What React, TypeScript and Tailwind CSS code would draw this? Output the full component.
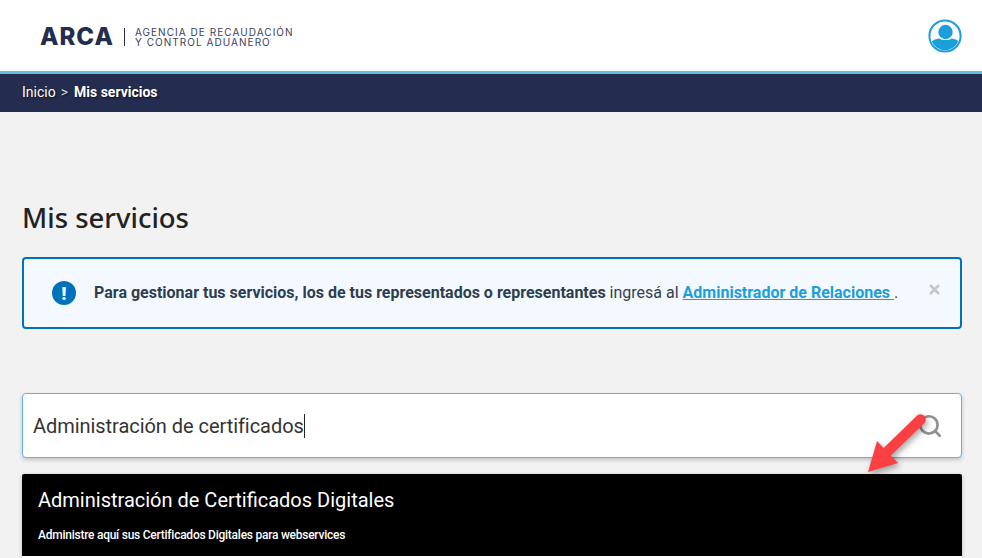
import { Search, X } from "lucide-react";

const roboto = "font-['Roboto','Liberation_Sans',sans-serif]";

const UserIcon = () => (
	<svg width="34" height="34" viewBox="0 0 34 34" aria-hidden="true">
		<defs>
			<clipPath id="user-clip">
				<circle cx="17" cy="17" r="14.2" />
			</clipPath>
		</defs>
		<circle cx="17" cy="17" r="15.6" fill="white" stroke="#1a9fdb" strokeWidth="2" />
		<g clipPath="url(#user-clip)" fill="#1a9fdb">
			<circle cx="17.5" cy="13" r="7.2" />
			<path d="M2 34 V25 C3 21.5 7 20 11.5 19.4 C14 21.4 21 21.4 23.5 19.4 C28 20 31 21.5 32 25 V34 Z" />
		</g>
	</svg>
);

const RedArrow = () => (
	<svg
		className="pointer-events-none absolute left-[860px] top-[410px] drop-shadow-[2px_3px_3px_rgba(0,0,0,0.35)]"
		width="72"
		height="72"
		viewBox="0 0 72 72"
		aria-hidden="true"
	>
		<path d="M60.5 9.5 L26 43" stroke="#fb4044" strokeWidth="10.5" strokeLinecap="round" fill="none" />
		<path d="M8 62 L17 31 L38 53 Z" fill="#fb4044" />
	</svg>
);

export default function App() {
	return (
		<main className={`relative h-[558px] w-[982px] overflow-hidden bg-[#f2f2f2] ${roboto}`}>
			<header className="flex h-[74px] items-center justify-between border-b-[3px] border-[#5bc4de] bg-white pl-[40px] pr-[20px]">
				<div className="mt-[3px] flex items-center">
					<span className="font-['Inter',sans-serif] text-[24px] font-extrabold leading-none tracking-[1px] text-[#242c4f]">
						ARCA
					</span>
					<span className="mx-[10px] h-[18px] w-px bg-[#242c4f]" />
					<div className="font-['Inter',sans-serif] text-[10px] tracking-[1.05px] text-[#3a4160]">
						<div className="h-[10px] overflow-visible leading-[10px]">AGENCIA DE RECAUDACIÓN</div>
						<div className="h-[10px] overflow-visible leading-[10px]">Y CONTROL ADUANERO</div>
					</div>
				</div>
				<UserIcon />
			</header>

			<nav className="flex h-[38px] items-center bg-[#242c4f] px-[22px] pb-[2px] text-[14px] text-white [text-shadow:1px_1px_2px_rgba(0,0,0,0.6)]">
				<span>Inicio</span>
				<span className="ml-[5px] mr-[6px] text-[#d5d8e2]">&gt;</span>
				<b className="font-bold">Mis servicios</b>
			</nav>

			<div className="pl-[22px] pr-[20px]">
				<h1 className="mt-[87px] font-['Noto_Sans',sans-serif] text-[27.5px] font-medium leading-[38px] text-[#222222]">
					Mis servicios
				</h1>

				<div className="relative mt-[20px] flex h-[72px] items-center rounded-[4px] border-2 border-[#0072bb] bg-[#f3f9ff] pl-[28px] text-[16px] text-[#333f4d]">
					<span className="mr-[18px] flex h-[24px] w-[24px] items-center justify-center rounded-full bg-[#0072bb] text-[19px] font-black leading-none text-white">
						!
					</span>
					<p>
						<b className="font-bold text-[#2d3e50]">Para gestionar tus servicios, los de tus representados o representantes</b> ingresá al{" "}
						<a className="font-bold text-[#1a9fdb] underline" href="#">
							Administrador de Relaciones{" "}
						</a>{" "}
						.
					</p>
					<X size={15} strokeWidth={4} className="absolute right-[18px] top-[23px] text-[#c4c6c9]" />
				</div>

				<div className="mt-[64px] flex h-[65px] items-center rounded-[4px] border border-[#64b2ec] bg-white pl-[10px] pr-[18px] text-[20px] tracking-[-0.05px] text-[#333333] shadow-[0_2px_4px_rgba(0,0,0,0.2)]">
					<span className="border-r border-[#222222] leading-[24px]">Administración de certificados</span>
					<Search size={26} strokeWidth={2.5} className="ml-auto text-[#909090]" />
				</div>

				<article className="mt-[16px] overflow-hidden rounded-t-[2px] bg-white shadow-[0_1px_4px_rgba(0,0,0,0.2)]">
					<div className="h-[82px] bg-black px-[16px] pt-[13px] text-white">
						<h2 className="text-[20px] font-normal leading-[26px]">Administración de Certificados Digitales</h2>
						<p className="mt-[14px] text-[12px] font-medium leading-[16px] tracking-[-0.25px]">
							Administre aquí sus Certificados Digitales para webservices
						</p>
					</div>
					<div className="h-[8px]" />
				</article>
			</div>

			<RedArrow />
		</main>
	);
}
